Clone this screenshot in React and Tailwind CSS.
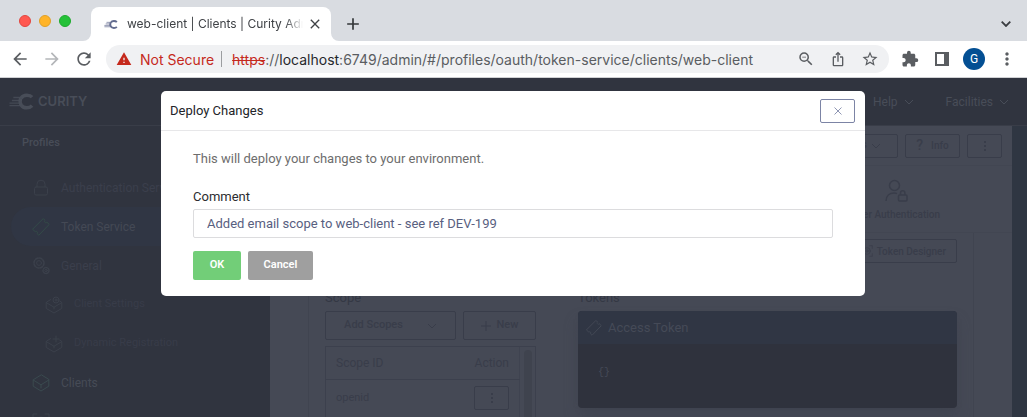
import {
  MdArrowBack,
  MdArrowForward,
  MdRefresh,
  MdWarning,
  MdZoomOut,
  MdIosShare,
  MdStarBorder,
  MdExtension,
  MdMoreVert,
  MdClose,
  MdAdd,
} from "react-icons/md";

function CurityMark({ className }) {
  return (
    <svg viewBox="0 0 26 17" className={className} fill="none" stroke="currentColor">
      <path d="M24 3.900C22.600 2.300 20.800 1.900 18.500 1.900c-3 0-4.800 1.200-5.800 3M12.600 12c1 1.800 2.900 3.100 5.900 3.100 2.300 0 4.100-.6 5.500-2.200M12.200 5c-.8 2.200-.8 4.800.4 7" strokeWidth="3.600" />
      <path d="M4.500 4.400H13M3 7.400h9M0.500 10.200h11.500M0.500 12.800H13" strokeWidth="1.500" opacity="0.85" />
    </svg>
  );
}

function Chevron({ className }) {
  return (
    <svg viewBox="0 0 10 6" className={className} fill="none" stroke="currentColor" strokeWidth="1">
      <path d="M1 1l4 4 4-4" />
    </svg>
  );
}

function Line({ className, children }) {
  return (
    <svg viewBox="0 0 18 18" className={className} fill="none" stroke="currentColor" strokeLinejoin="round" strokeLinecap="round">
      {children}
    </svg>
  );
}

function LockIcon() {
  return (
    <Line className="size-[18px]">
      <rect x="2.500" y="8" width="13" height="8" rx="1.500" />
      <path d="M5 8V5.200a4 4 0 0 1 8 0V8" />
    </Line>
  );
}

function TicketIcon({ className }) {
  return (
    <Line className={className}>
      <path d="M11.500 .8l1.600 1.600a1 1 0 0 0-.2 1.800 1 1 0 0 0 1.900-.1l2.400 2.300L6.800 17.200l-1.700-1.600a.9.900 0 0 0-1.800-1.900L.8 11.500z" />
    </Line>
  );
}

function GearsIcon() {
  return (
    <Line className="size-[18px]">
      <circle cx="7" cy="6" r="2.400" />
      <circle cx="7" cy="6" r="5" strokeDasharray="2.400 1.500" strokeWidth="1.600" />
      <circle cx="14" cy="13.500" r="1.200" />
      <circle cx="14" cy="13.500" r="3" strokeDasharray="1.600 1.100" strokeWidth="1.400" />
    </Line>
  );
}

function BoxIcon({ badge }) {
  return (
    <Line className="size-[18px]">
      {badge ? (
        <path d="M5.600 3.600L1.200 6.400v6L9 17l7.800-4.600v-6l-2.200-1.400M1.200 6.600L9 11.200l7.800-4.600M9 11.200V13" />
      ) : (
        <path d="M9 1L1.200 5.800v6.400L9 17l7.800-4.800V5.800zM1.200 6L9 10.800 16.800 6M9 10.800V14" />
      )}
      {badge === "plus" && <path d="M11 1v6M8 4h6" />}
      {badge === "gear" && (
        <>
          <circle cx="11" cy="4" r="1" />
          <circle cx="11" cy="4" r="3" />
        </>
      )}
    </Line>
  );
}

function ScanIcon({ className }) {
  return (
    <Line className={className}>
      <path d="M1 5V1h4M13 1h4v4M17 13v4h-4M5 17H1v-4" />
      <circle cx="9" cy="9" r="5" />
      <circle cx="9" cy="9" r="1.800" />
    </Line>
  );
}

function UserLockIcon() {
  return (
    <svg viewBox="0 0 24 24" className="size-6" fill="none" stroke="currentColor" strokeWidth="1.500">
      <circle cx="10.500" cy="6.500" r="5" />
      <path d="M2 22c.2-5 3.500-8 8-8 1.200 0 2.200.2 3 .6" />
      <rect x="14.500" y="16" width="8.500" height="6" rx="1" />
      <path d="M16.500 16v-2a2.200 2.200 0 0 1 4.400 0v2" />
    </svg>
  );
}

function BrowserChrome() {
  return (
    <header className="shrink-0 bg-[#d9dce1] text-[#5a5d61]">
      <div className="flex h-[41px] items-end">
        <div className="flex w-[83px] shrink-0 gap-2 self-center pl-[19px]">
          <span className="size-3 rounded-full border border-[#e2463f] bg-[#ff5850]" />
          <span className="size-3 rounded-full border border-[#e0a028] bg-[#ffb429]" />
          <span className="size-3 rounded-full border border-[#1dab2d] bg-[#25c138]" />
        </div>
        <svg viewBox="0 0 8 8" className="size-2 shrink-0" fill="white">
          <path d="M8 0v8H0a8 8 0 0 0 8-8z" />
        </svg>
        <div className="flex h-[34px] w-[240px] shrink-0 items-center rounded-t-lg bg-white pr-2 pl-[13px] text-[#3f4246]">
          <CurityMark className="h-[9px] w-[14px] shrink-0 text-[#626b8f]" />
          <span className="ml-[9px] flex-1 overflow-hidden mask-r-from-90% font-[Inter,sans-serif] text-[12px] whitespace-nowrap">
            web-client | Clients | Curity Admin
          </span>
          <button aria-label="Close tab" className="ml-1">
            <MdClose className="size-4" />
          </button>
        </div>
        <svg viewBox="0 0 8 8" className="size-2 shrink-0" fill="white">
          <path d="M0 0v8h8a8 8 0 0 1-8-8z" />
        </svg>
        <button aria-label="New tab" className="mb-[7px] ml-1 text-[#333639]">
          <MdAdd className="size-5" />
        </button>
        <button aria-label="Search tabs" className="mr-4 mb-[14px] ml-auto text-[#3a3d41]">
          <svg viewBox="0 0 10 6" className="h-1.5 w-2.5" fill="none" stroke="currentColor" strokeWidth="1.800">
            <path d="M0.700 0.700L5 5l4.300-4.300" />
          </svg>
        </button>
      </div>
      <div className="flex h-[37px] items-center border-b border-[#d0d1d4] bg-white pr-2.5 pl-2.5">
        <button aria-label="Back"><MdArrowBack className="size-5" /></button>
        <button aria-label="Forward" className="ml-3 text-[#b4b6b9]"><MdArrowForward className="size-5" /></button>
        <button aria-label="Reload" className="ml-3"><MdRefresh className="size-5" /></button>
        <div className="ml-3 flex h-7 min-w-0 flex-1 items-center rounded-full bg-[#f0f1f3] pr-2.5 pl-2.5 font-[Inter,sans-serif] text-[14px] whitespace-nowrap">
          <MdWarning className="size-4 shrink-0 text-[#c5291c]" />
          <span className="ml-2 text-[#c5291c]">Not Secure</span>
          <span className="mr-2.5 ml-[7px] h-4 w-px bg-[#9b9da0]" />
          <span className="min-w-0 flex-1 overflow-hidden">
            <span className="text-[#c5291c] line-through">https</span>://<span className="text-[#26282b]">localhost</span>
            :6749/admin/#/profiles/oauth/token-service/clients/web-client
          </span>
          <button aria-label="Zoom"><MdZoomOut className="size-[18px]" /></button>
          <button aria-label="Share" className="ml-[15px]"><MdIosShare className="size-4" /></button>
          <button aria-label="Bookmark" className="ml-[15px]"><MdStarBorder className="size-[18px]" /></button>
        </div>
        <button aria-label="Extensions" className="ml-3"><MdExtension className="size-[18px]" /></button>
        <button aria-label="Side panel" className="ml-4">
          <span className="block size-3.5 border-2 border-r-[5px] border-current" />
        </button>
        <button className="ml-3.5 size-[22px] rounded-full bg-[#034f93] font-[Roboto,sans-serif] text-[12px] text-white">G</button>
        <button aria-label="Menu" className="ml-3"><MdMoreVert className="size-5" /></button>
      </div>
    </header>
  );
}

const navItems = [
  { label: "Authentication Service", icon: <LockIcon />, color: "text-[#3b3f4c]" },
  { label: "Token Service", icon: <TicketIcon className="size-[18px]" />, color: "text-[#444955]", iconColor: "text-[#344b48]", active: true },
  { label: "General", icon: <GearsIcon />, color: "text-[#3b3f4c]" },
  { label: "Client Settings", icon: <BoxIcon badge="gear" />, color: "text-[#383c49]", sub: true },
  { label: "Dynamic Registration", icon: <BoxIcon badge="plus" />, color: "text-[#383c49]", sub: true },
  { label: "Clients", icon: <BoxIcon />, color: "text-[#464b56]", iconColor: "text-[#3a4a4f]" },
];

function Sidebar() {
  return (
    <nav className="w-[270px] shrink-0 overflow-hidden pt-2 text-[12px]">
      <h2 className="pl-[22px] text-[11px] leading-[18px] font-medium text-[#484d58]">Profiles</h2>
      <ul className="mt-4">
        {navItems.map((item) => (
          <li key={item.label} className={item.sub ? "pl-6 text-[11px]" : "pl-[11px]"}>
            <a
              href="#"
              className={`flex h-[39px] items-center gap-[11px] rounded-l-full pl-[21px] ${item.color} ${item.active ? "bg-[#303644]" : ""}`}
            >
              <span className={`flex w-[18px] justify-center ${item.iconColor ?? "text-[#3b404b]"}`}>{item.icon}</span>
              {item.label}
            </a>
          </li>
        ))}
        <li className="pl-[11px]">
          <a href="#" aria-label="Scopes" className="flex h-[39px] items-center pl-[21px] text-[#3b404b]">
            <ScanIcon className="size-[18px]" />
          </a>
        </li>
      </ul>
    </nav>
  );
}

function AppHeader() {
  return (
    <div className="flex h-12 shrink-0 items-center border-b border-[#393d48] pr-[18px] pl-[9px] text-[#484d58]">
      <CurityMark className="h-[17px] w-[25px]" />
      <span className="ml-1 font-[Inter,sans-serif] text-[13px] leading-none font-semibold">CURITY</span>
      <div className="ml-auto flex items-center text-[12px]">
        <span className="mr-2 flex size-4 items-center justify-center rounded-full border border-current">?</span>
        <button className="flex items-center gap-1.5">
          Help <Chevron className="w-2.5" />
        </button>
        <button className="ml-8 flex items-center gap-1.5">
          Facilities <Chevron className="w-2.5" />
        </button>
      </div>
    </div>
  );
}

function OutlineButton({ className, children, ...rest }) {
  return (
    <button {...rest} className={`flex items-center justify-center rounded-xs border border-[#393d4a] font-medium ${className}`}>
      {children}
    </button>
  );
}

function Kebab() {
  return (
    <span className="flex flex-col gap-0.5">
      <span className="size-0.5 bg-current" />
      <span className="size-0.5 bg-current" />
      <span className="size-0.5 bg-current" />
    </span>
  );
}

function ScopeColumn() {
  return (
    <section className="flex w-[211px] shrink-0 flex-col">
      <h3 className="text-[13px] leading-[18px] text-[#343844]">Scope</h3>
      <div className="mt-1 flex gap-[7px] text-[11px]">
        <OutlineButton className="h-[29px] flex-1 gap-6">
          Add Scopes <Chevron className="w-2.5" />
        </OutlineButton>
        <OutlineButton className="h-[29px] w-[73px] gap-1.5">
          <svg viewBox="0 0 10 10" className="size-2.5" stroke="currentColor"><path d="M5 0v10M0 5h10" /></svg>
          New
        </OutlineButton>
      </div>
      <div className="mt-1.5 flex flex-1 border border-b-0 border-[#3c404d]">
        <table className="flex-1 self-start border-r border-[#3f4350] text-left">
          <thead>
            <tr className="h-[32px] border-b border-[#3c404d] text-[12px]">
              <th className="pl-2.5 font-normal">Scope ID</th>
              <th className="pr-2.5 text-right font-normal">Action</th>
            </tr>
          </thead>
          <tbody>
            <tr className="h-[38px] text-[11px]">
              <td className="pl-2.5">openid</td>
              <td className="pr-2.5">
                <OutlineButton aria-label="Scope actions" className="ml-auto h-6 w-[35px]"><Kebab /></OutlineButton>
              </td>
            </tr>
          </tbody>
        </table>
        <div className="flex w-[15px] justify-center pt-[3px]">
          <span className="w-2 rounded-t-full bg-[#3f434e]" />
        </div>
      </div>
    </section>
  );
}

function TokenColumn() {
  return (
    <section className="ml-[42px] min-w-0 flex-1">
      <h3 className="text-[13px] leading-[18px] text-[#343844]">Tokens</h3>
      <div className="mt-1 overflow-hidden rounded-sm bg-[#2f323d] text-[#454a57] shadow-lg shadow-[#404450]">
        <div className="flex h-[33px] items-center gap-1.5 bg-[#303644] pl-2 text-[13px]">
          <TicketIcon className="size-4" />
          Access Token
        </div>
        <pre className="h-16 pt-5 pl-5 font-['Liberation_Mono',monospace] text-[10px] leading-[18px]">{"{}"}</pre>
      </div>
    </section>
  );
}

function Content() {
  return (
    <main className="flex min-w-0 flex-1 flex-col overflow-hidden bg-[#454955] text-[#393d4a]">
      <div className="flex h-10 shrink-0 items-center justify-end gap-[7px] border-b border-[#424652] pr-2.5 text-[11px]">
        <OutlineButton className="h-6 gap-1 px-4">
          Actions <Chevron className="w-2.5" />
        </OutlineButton>
        <OutlineButton className="h-6 w-[55px] gap-2 text-[10px]">
          <span className="text-[14px]">?</span> Info
        </OutlineButton>
        <OutlineButton aria-label="More actions" className="h-6 w-[35px]"><Kebab /></OutlineButton>
      </div>
      <div className="flex h-[67px] shrink-0 items-center justify-end border-b border-[#424652] pr-[72px] text-[10px] font-medium">
        <a href="#" className="flex flex-col items-center gap-1 pt-1 leading-4">
          <UserLockIcon />
          User Authentication
        </a>
      </div>
      <div className="mx-[38px] flex flex-1 flex-col border-x border-[#404450] px-4 pt-1.5">
        <OutlineButton className="h-6 gap-1 self-end px-2.5 text-[10px]">
          <ScanIcon className="size-3" /> Token Designer
        </OutlineButton>
        <div className="mt-[26px] flex flex-1">
          <ScopeColumn />
          <TokenColumn />
        </div>
      </div>
    </main>
  );
}

function DeployDialog() {
  return (
    <div className="absolute inset-0 flex items-start justify-center pt-[13px] pr-[17px] pl-4">
      <div role="dialog" aria-labelledby="deploy-title" className="w-full max-w-[704px] rounded-[5px] bg-white">
        <div className="flex h-10 items-center justify-between border-b border-[#e7e7e9] pr-2.5 pl-[9px]">
          <h1 id="deploy-title" className="text-[13px] text-[#222428]">Deploy Changes</h1>
          <button aria-label="Close" className="flex h-6 w-[35px] items-center justify-center rounded-xs border border-[#7c84a5] text-[#8f96b3]">
            <svg viewBox="0 0 8 8" className="size-2" stroke="currentColor"><path d="M0.500 0.500l7 7M7.500 0.500l-7 7" /></svg>
          </button>
        </div>
        <form className="px-8 pt-[19px] pb-4" onSubmit={(e) => e.preventDefault()}>
          <p className="text-[13px] leading-[18px] text-[#6d6d6d]">This will deploy your changes to your environment.</p>
          <label htmlFor="comment" className="mt-5 block text-[13px] leading-[18px] text-[#2c2d30]">Comment</label>
          <input
            id="comment"
            type="text"
            defaultValue="Added email scope to web-client - see ref DEV-199"
            className="mt-[3px] block h-[29px] w-full rounded-xs border border-[#dcdcde] px-[13px] text-[13px] text-[#58607f] outline-none"
          />
          <div className="mt-[13px] flex gap-[7px] text-[11px] font-semibold text-white">
            <button type="submit" className="h-[29px] w-12 rounded-xs bg-[#72ce78]">OK</button>
            <button type="button" className="h-[29px] w-[65px] rounded-xs bg-[#9f9f9f]">Cancel</button>
          </div>
        </form>
      </div>
    </div>
  );
}

export default function App() {
  return (
    <div className="flex h-screen flex-col overflow-hidden bg-[#30343f] font-[Roboto,sans-serif]">
      <BrowserChrome />
      <div className="relative flex min-h-0 flex-1 flex-col">
        <AppHeader />
        <div className="flex min-h-0 flex-1">
          <Sidebar />
          <Content />
          <div className="w-[15px] shrink-0 bg-[#2f3642]" />
        </div>
        <DeployDialog />
      </div>
    </div>
  );
}
